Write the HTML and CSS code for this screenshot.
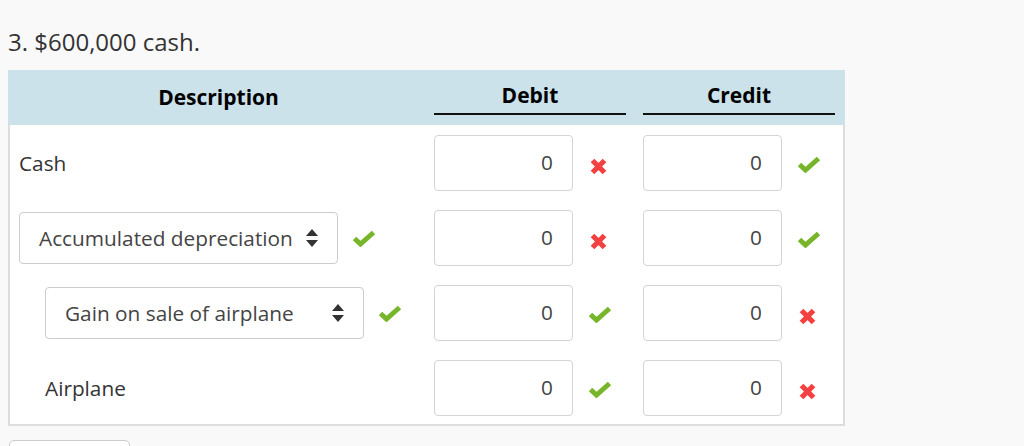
FILE: index.html
```html
<!DOCTYPE html>
<html>
<head>
<meta charset="utf-8">
<link rel="stylesheet" href="styles.css">
</head>
<body>
<h3 class="title">3. $600,000 cash.</h3>
<div class="journal">
  <div class="head">
    <div class="hcell desc-h">Description</div>
    <div class="hcell amt-h">Debit</div>
    <div class="hcell amt-h">Credit</div>
  </div>
  <div class="body">
    <div class="row">
      <div class="desc"><span class="label">Cash</span></div>
      <div class="amt"><div class="box">0</div><svg class="ico x" viewBox="0 0 17 17"><path d="M2.5 2.5L14.5 14.5M14.5 2.5L2.5 14.5"/></svg></div>
      <div class="amt"><div class="box">0</div><svg class="ico ok" viewBox="0 0 24 17"><path d="M2.5 8.5L8.5 14L21.5 2.5"/></svg></div>
    </div>
    <div class="row">
      <div class="desc"><div class="select">Accumulated depreciation<svg class="sort" viewBox="0 0 12 18"><path d="M6 0L12 7H0Z M0 11H12L6 18Z"/></svg></div><svg class="ico ok" viewBox="0 0 24 17"><path d="M2.5 8.5L8.5 14L21.5 2.5"/></svg></div>
      <div class="amt"><div class="box">0</div><svg class="ico x" viewBox="0 0 17 17"><path d="M2.5 2.5L14.5 14.5M14.5 2.5L2.5 14.5"/></svg></div>
      <div class="amt"><div class="box">0</div><svg class="ico ok" viewBox="0 0 24 17"><path d="M2.5 8.5L8.5 14L21.5 2.5"/></svg></div>
    </div>
    <div class="row">
      <div class="desc indent"><div class="select">Gain on sale of airplane<svg class="sort" viewBox="0 0 12 18"><path d="M6 0L12 7H0Z M0 11H12L6 18Z"/></svg></div><svg class="ico ok" viewBox="0 0 24 17"><path d="M2.5 8.5L8.5 14L21.5 2.5"/></svg></div>
      <div class="amt"><div class="box">0</div><svg class="ico ok" viewBox="0 0 24 17"><path d="M2.5 8.5L8.5 14L21.5 2.5"/></svg></div>
      <div class="amt"><div class="box">0</div><svg class="ico x" viewBox="0 0 17 17"><path d="M2.5 2.5L14.5 14.5M14.5 2.5L2.5 14.5"/></svg></div>
    </div>
    <div class="row">
      <div class="desc indent"><span class="label">Airplane</span></div>
      <div class="amt"><div class="box">0</div><svg class="ico ok" viewBox="0 0 24 17"><path d="M2.5 8.5L8.5 14L21.5 2.5"/></svg></div>
      <div class="amt"><div class="box">0</div><svg class="ico x" viewBox="0 0 17 17"><path d="M2.5 2.5L14.5 14.5M14.5 2.5L2.5 14.5"/></svg></div>
    </div>
  </div>
</div>
<div class="btn"></div>
</body>
</html>
```
FILE: styles.css
```css
html, body {
  margin: 0;
  background: #f9f9f9;
}
html {
  height: 446px;
  overflow: hidden;
}
body {
  padding: 0 8px;
  font-family: "Open Sans", "Liberation Sans", sans-serif;
  color: #333;
}
.title {
  margin: 0;
  padding-top: 25px;
  height: 70px;
  box-sizing: border-box;
  font-size: 24px;
  font-weight: normal;
  line-height: 34px;
  color: #333;
}
.journal {
  width: 837px;
}
.head {
  display: grid;
  grid-template-columns: 1fr 192px 192px;
  column-gap: 17px;
  padding-right: 10px;
  height: 55px;
  background: #cbe2eb;
}
.hcell {
  font-weight: bold;
  font-size: 21px;
  color: #000;
  text-align: center;
}
.desc-h {
  padding-left: 12px;
  padding-top: 12px;
  line-height: 30px;
}
.amt-h {
  padding-top: 10px;
  line-height: 30px;
  height: 45px;
  box-sizing: border-box;
  border-bottom: 2px solid #111;
}
.body {
  background: #fff;
  border: 2px solid #ddd;
  border-top: 0;
  padding: 10px 8px 8px 0;
  display: flex;
  flex-direction: column;
  gap: 19px;
}
.row {
  display: grid;
  grid-template-columns: 1fr 192px 192px;
  column-gap: 17px;
  height: 56px;
  font-size: 20.8px;
}
.desc {
  display: flex;
  align-items: center;
  padding-left: 9px;
}
.desc.indent {
  padding-left: 35px;
}
.label {
  color: #333;
}
.select {
  width: 319px;
  height: 52px;
  box-sizing: border-box;
  border: 1px solid #ccc;
  border-radius: 4px;
  display: flex;
  align-items: center;
  justify-content: space-between;
  padding: 0 19px 0 19px;
  color: #444;
  background: #fff;
}
.sort {
  width: 12px;
  height: 18px;
  fill: #333;
}
.amt {
  display: flex;
  align-items: center;
}
.box {
  width: 139px;
  height: 56px;
  box-sizing: border-box;
  border: 1px solid #d4d4d4;
  border-radius: 4px;
  text-align: right;
  padding-right: 19px;
  line-height: 52px;
  color: #444;
  background: #fff;
}
.ico {
  fill: none;
  stroke-linecap: butt;
}
.ico.x {
  width: 17px;
  height: 17px;
  margin-left: 17px;
  margin-top: 7px;
  stroke: #f44040;
  stroke-width: 5.2;
}
.ico.ok {
  width: 24px;
  height: 17px;
  margin-left: 15px;
  margin-top: 2px;
  stroke: #77b52a;
  stroke-width: 5;
}
.desc .ico.ok {
  margin-left: 14px;
  margin-top: 0;
}
.btn {
  margin-top: 14px;
  width: 119px;
  height: 36px;
  margin-left: 1px;
  border: 1px solid #ccc;
  border-radius: 5px;
  background: #fff;
}
```
